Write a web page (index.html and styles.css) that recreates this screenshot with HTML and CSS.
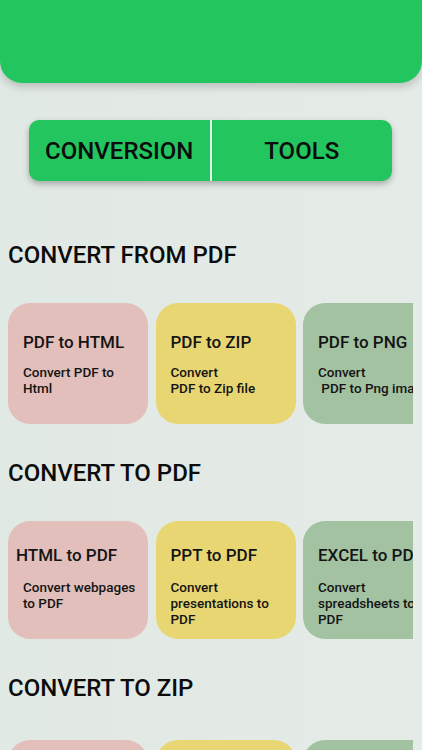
FILE: index.html
```html
<!DOCTYPE html>
<html>
<head>
<meta charset="utf-8">
<link rel="stylesheet" href="styles.css">
</head>
<body>
<div class="app">
  <header class="topbar"></header>
  <nav class="tabs">
    <div class="tab">CONVERSION</div>
    <div class="divider"></div>
    <div class="tab">TOOLS</div>
  </nav>

  <section class="section">
    <h2 class="heading">CONVERT FROM PDF</h2>
    <div class="row row-from">
      <div class="card pink">
        <div class="title">PDF to HTML</div>
        <div class="sub">Convert PDF to<br>Html</div>
      </div>
      <div class="card yellow">
        <div class="title">PDF to ZIP</div>
        <div class="sub">Convert<br>PDF to Zip file</div>
      </div>
      <div class="card green">
        <div class="title">PDF to PNG</div>
        <div class="sub">Convert<br>&nbsp;PDF to Png image</div>
      </div>
    </div>
  </section>

  <section class="section">
    <h2 class="heading">CONVERT TO PDF</h2>
    <div class="row row-to">
      <div class="card pink">
        <div class="title title-left">HTML to PDF</div>
        <div class="sub">Convert webpages<br>to PDF</div>
      </div>
      <div class="card yellow">
        <div class="title">PPT to PDF</div>
        <div class="sub">Convert<br>presentations to<br>PDF</div>
      </div>
      <div class="card green">
        <div class="title">EXCEL to PDF</div>
        <div class="sub">Convert<br>spreadsheets to<br>PDF</div>
      </div>
    </div>
  </section>

  <section class="section">
    <h2 class="heading heading-zip">CONVERT TO ZIP</h2>
    <div class="row">
      <div class="card pink"></div>
      <div class="card yellow"></div>
      <div class="card green"></div>
    </div>
  </section>
</div>
</body>
</html>
```
FILE: styles.css
```css
* { box-sizing: border-box; }
html, body {
  margin: 0;
  padding: 0;
  height: 100%;
  overflow: hidden;
}
body {
  background: linear-gradient(90deg, #e1e9e4 0%, #e5ebe7 100%);
  font-family: Roboto, "Liberation Sans", sans-serif;
  color: #111;
}
.app {
  width: 422px;
  height: 750px;
  overflow: hidden;
}
.topbar {
  height: 83px;
  background: #23c55f;
  border-radius: 0 0 22px 22px;
  box-shadow: 0 4px 8px rgba(0, 0, 0, 0.18);
}
.tabs {
  margin: 37px 30px 0 29px;
  height: 61px;
  background: #23c55f;
  border-radius: 10px;
  display: flex;
  align-items: stretch;
  box-shadow: 0 3px 6px rgba(0, 0, 0, 0.28);
}
.tab {
  flex: 1;
  display: flex;
  align-items: center;
  justify-content: center;
  font-size: 24px;
  font-weight: 500;
  color: #0c0c0c;
}
.divider {
  width: 2px;
  background: #e0fbe8;
}
.section {
  margin-top: 60px;
}
.section + .section {
  margin-top: 35px;
}
.heading {
  margin: 0 0 34px 8px;
  font-size: 24px;
  line-height: 28px;
  font-weight: 500;
  color: #0c0c0c;
}
.heading-zip {
  margin-bottom: 38px;
}
.row {
  margin-left: 8px;
  width: 405px;
  display: flex;
  gap: 7.5px;
  overflow: hidden;
}
.card {
  flex: 0 0 140px;
  height: 120px;
  border-radius: 22px;
  padding: 29px 0 0 15px;
  white-space: nowrap;
  overflow: hidden;
}
.row-from .card { height: 121px; }
.row-to .card { height: 118px; padding-top: 24px; }
.pink { background: #e2bfba; }
.yellow { background: #e8d672; }
.green { background: #a3c2a1; }
.title {
  font-size: 17px;
  line-height: 20px;
  font-weight: 500;
  color: #141414;
}
.title-left {
  margin-left: -7px;
}
.sub {
  margin-top: 12px;
  font-size: 13.5px;
  line-height: 16px;
  font-weight: 500;
  color: #141414;
}
.row-to .sub { margin-top: 14px; }
```
